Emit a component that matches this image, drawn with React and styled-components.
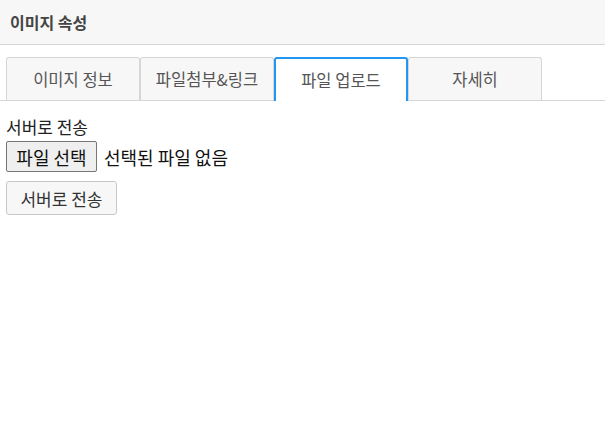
import React from "react";
import styled, { createGlobalStyle } from "styled-components";

const Global = createGlobalStyle`
  html, body { margin: 0; padding: 0; background: #fff; }
  body { font-family: "Noto Sans CJK KR", "Noto Sans", sans-serif; color: #333; }
`;

const Header = styled.div`
  height: 44px;
  background: #f7f7f7;
  border-bottom: 1px solid #d6d6d6;
  display: flex;
  align-items: center;
  padding: 0 10px;
  font-size: 16px;
  font-weight: 700;
  color: #444;
`;

const Tabs = styled.div`
  display: flex;
  padding: 12px 6px 0;
  border-bottom: 1px solid #d6d6d6;
`;

const Tab = styled.div`
  width: 134px;
  box-sizing: border-box;
  display: flex;
  align-items: center;
  justify-content: center;
  font-size: 16.5px;
  color: #555;
  background: ${(p) => (p.$active ? "#fff" : "#f7f7f7")};
  border: ${(p) => (p.$active ? "2px solid #2196f3" : "1px solid #d6d6d6")};
  border-bottom: none;
  border-radius: 3px 3px 0 0;
  margin-bottom: ${(p) => (p.$active ? "-1px" : "0")};
  height: ${(p) => (p.$active ? "44px" : "43px")};
`;

const Body = styled.div`
  padding: 15px 6px;
  display: flex;
  flex-direction: column;
  align-items: flex-start;
`;

const Label = styled.div`
  font-size: 17px;
  color: #222;
  line-height: 22px;
`;

const FileRow = styled.div`
  margin-top: 3px;
  display: flex;
  align-items: center;
  gap: 7px;
  font-size: 18px;
  color: #111;
`;

const FileButton = styled.button`
  font-family: inherit;
  font-size: 18px;
  color: #111;
  width: 91px;
  height: 31px;
  padding: 0;
  background: #efefef;
  border: 1px solid #767676;
  border-radius: 2px;
`;

const SendButton = styled.button`
  margin-top: 9px;
  font-family: inherit;
  font-size: 17px;
  color: #333;
  width: 111px;
  height: 34px;
  padding: 0;
  background: #f7f7f7;
  border: 1px solid #c8c8c8;
  border-radius: 3px;
`;

const tabs = ["이미지 정보", "파일첨부&링크", "파일 업로드", "자세히"];

export default function App() {
  return (
    <>
      <Global />
      <Header>이미지 속성</Header>
      <Tabs>
        {tabs.map((t, i) => (
          <Tab key={t} $active={i === 2}>{t}</Tab>
        ))}
      </Tabs>
      <Body>
        <Label>서버로 전송</Label>
        <FileRow>
          <FileButton>파일 선택</FileButton>
          <span>선택된 파일 없음</span>
        </FileRow>
        <SendButton>서버로 전송</SendButton>
      </Body>
    </>
  );
}
